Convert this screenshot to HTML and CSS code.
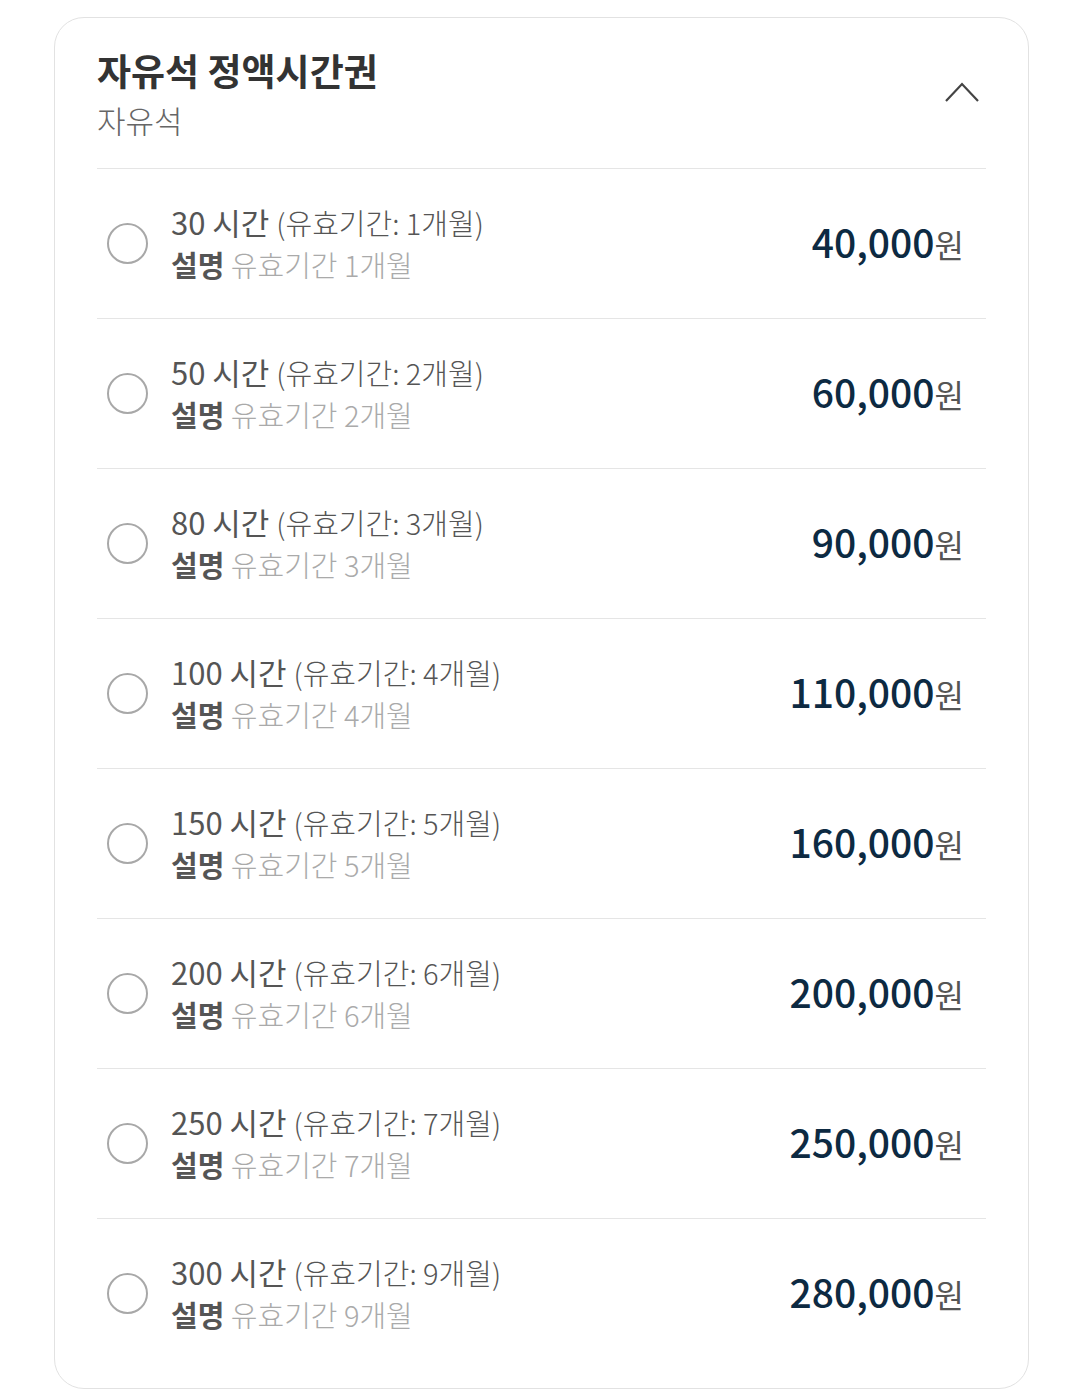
FILE: index.html
```html
<!DOCTYPE html>
<html>
  <head>
    <meta charset="UTF-8" />
    <link rel="stylesheet" href="styles.css">
  </head>

  <body>
    <div class="ticket-card">
      <div class="ticket-header">
        <div>
          <h2 class="ticket-title">자유석 정액시간권</h2>
          <div class="ticket-sub">자유석</div>
        </div>
        <svg class="chevron" width="36" height="22" viewBox="0 0 36 22">
          <path d="M2 20 L18 3 L34 20" fill="none" stroke="#444" stroke-width="2.2" />
        </svg>
      </div>

      <ul class="option-list">
        <li class="option">
          <span class="radio"></span>
          <div class="option-text">
            <div class="option-name">30 시간 <span class="period">(유효기간: 1개월)</span></div>
            <div class="option-desc"><strong>설명</strong> 유효기간 1개월</div>
          </div>
          <div class="price">40,000<span class="won">원</span></div>
        </li>
        <li class="option">
          <span class="radio"></span>
          <div class="option-text">
            <div class="option-name">50 시간 <span class="period">(유효기간: 2개월)</span></div>
            <div class="option-desc"><strong>설명</strong> 유효기간 2개월</div>
          </div>
          <div class="price">60,000<span class="won">원</span></div>
        </li>
        <li class="option">
          <span class="radio"></span>
          <div class="option-text">
            <div class="option-name">80 시간 <span class="period">(유효기간: 3개월)</span></div>
            <div class="option-desc"><strong>설명</strong> 유효기간 3개월</div>
          </div>
          <div class="price">90,000<span class="won">원</span></div>
        </li>
        <li class="option">
          <span class="radio"></span>
          <div class="option-text">
            <div class="option-name">100 시간 <span class="period">(유효기간: 4개월)</span></div>
            <div class="option-desc"><strong>설명</strong> 유효기간 4개월</div>
          </div>
          <div class="price">110,000<span class="won">원</span></div>
        </li>
        <li class="option">
          <span class="radio"></span>
          <div class="option-text">
            <div class="option-name">150 시간 <span class="period">(유효기간: 5개월)</span></div>
            <div class="option-desc"><strong>설명</strong> 유효기간 5개월</div>
          </div>
          <div class="price">160,000<span class="won">원</span></div>
        </li>
        <li class="option">
          <span class="radio"></span>
          <div class="option-text">
            <div class="option-name">200 시간 <span class="period">(유효기간: 6개월)</span></div>
            <div class="option-desc"><strong>설명</strong> 유효기간 6개월</div>
          </div>
          <div class="price">200,000<span class="won">원</span></div>
        </li>
        <li class="option">
          <span class="radio"></span>
          <div class="option-text">
            <div class="option-name">250 시간 <span class="period">(유효기간: 7개월)</span></div>
            <div class="option-desc"><strong>설명</strong> 유효기간 7개월</div>
          </div>
          <div class="price">250,000<span class="won">원</span></div>
        </li>
        <li class="option">
          <span class="radio"></span>
          <div class="option-text">
            <div class="option-name">300 시간 <span class="period">(유효기간: 9개월)</span></div>
            <div class="option-desc"><strong>설명</strong> 유효기간 9개월</div>
          </div>
          <div class="price">280,000<span class="won">원</span></div>
        </li>
      </ul>
    </div>
  </body>
</html>
```

FILE: styles.css
```css
body {
  margin: 0;
  background: white;
  font-family: 'Noto Sans CJK KR', 'Noto Sans', sans-serif;
}
.ticket-card {
  margin: 17px 50px 0 54px;
  width: 975px;
  box-sizing: border-box;
  border: 1px solid #e2e2e2;
  border-radius: 30px;
  padding: 0 42px 20px 42px;
}
.ticket-header {
  display: flex;
  justify-content: space-between;
  align-items: flex-start;
  padding: 27px 0 23px 0;
  border-bottom: 1px solid #e5e5e5;
}
.ticket-title {
  margin: 0;
  font-size: 37px;
  line-height: 50px;
  font-weight: 700;
  color: #333;
}
.ticket-sub {
  font-size: 31px;
  line-height: 50px;
  font-weight: 300;
  color: #666;
}
.chevron {
  margin: 36px 6px 0 0;
}
.option-list {
  list-style: none;
  margin: 0;
  padding: 0;
}
.option {
  display: flex;
  align-items: center;
  height: 149px;
  border-bottom: 1px solid #e5e5e5;
}
.option:last-child {
  border-bottom: none;
}
.radio {
  width: 37px;
  height: 37px;
  border: 2px solid #a8a8a8;
  border-radius: 50%;
  margin: 0 23px 0 10px;
  flex-shrink: 0;
}
.option-text {
  flex: 1;
  margin-top: -2px;
}
.option-name {
  font-size: 31px;
  line-height: 42px;
  color: #555;
}
.period {
  font-size: 29px;
  font-weight: 300;
  color: #555;
}
.option-desc {
  font-size: 29px;
  line-height: 42px;
  font-weight: 300;
  color: #aaa;
}
.option-desc strong {
  font-weight: 700;
  color: #555;
}
.price {
  margin: -6px 22px 0 0;
  font-size: 39px;
  font-weight: 500;
  color: #0d2a42;
}
.won {
  font-size: 32px;
  font-weight: 400;
  color: #555;
}
```
